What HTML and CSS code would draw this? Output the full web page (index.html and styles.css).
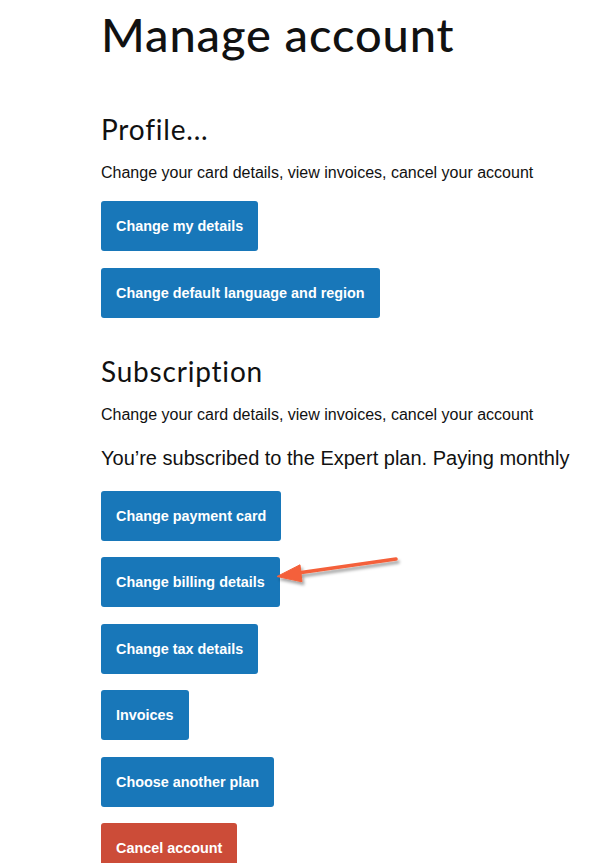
FILE: index.html
```html
<!DOCTYPE html>
<html lang="en">
<head>
<meta charset="utf-8">
<title>Manage account</title>
<link rel="stylesheet" href="styles.css">
</head>
<body>
<main class="page">
  <h1 class="title">Manage account</h1>

  <section class="section">
    <h2 class="section-title">Profile...</h2>
    <p class="lead">Change your card details, view invoices, cancel your account</p>
    <div class="actions actions-profile">
      <a class="btn" href="#">Change my details</a>
      <a class="btn" href="#">Change default language and region</a>
    </div>
  </section>

  <section class="section section-sub">
    <h2 class="section-title">Subscription</h2>
    <p class="lead">Change your card details, view invoices, cancel your account</p>
    <p class="plan">You’re subscribed to the Expert plan. Paying monthly</p>
    <div class="actions actions-sub">
      <a class="btn" href="#">Change payment card</a>
      <a class="btn" href="#">Change billing details</a>
      <a class="btn" href="#">Change tax details</a>
      <a class="btn" href="#">Invoices</a>
      <a class="btn" href="#">Choose another plan</a>
      <a class="btn btn-danger" href="#">Cancel account</a>
    </div>
  </section>

  <svg class="annotation" width="608" height="863" viewBox="0 0 608 863" aria-hidden="true">
    <defs>
      <filter id="shadow" x="-20%" y="-50%" width="140%" height="200%">
        <feDropShadow dx="2" dy="3" stdDeviation="1.8" flood-color="#000" flood-opacity="0.35"/>
      </filter>
    </defs>
    <g filter="url(#shadow)" fill="#f4613a" stroke="#f4613a">
      <line x1="396" y1="559" x2="296" y2="573.2" stroke-width="3.6" stroke-linecap="round"/>
      <polygon points="277,576.5 300,564.8 302,581.8" stroke-width="1" stroke-linejoin="round"/>
    </g>
  </svg>
</main>
</body>
</html>
```

FILE: styles.css
```css
html, body {
  margin: 0;
  padding: 0;
  background: #ffffff;
}

.page {
  position: relative;
  width: 608px;
  height: 863px;
  overflow: hidden;
  box-sizing: border-box;
  padding: 6px 0 0 101px;
  color: #111111;
  font-family: "Liberation Sans", Arial, sans-serif;
}

.title {
  margin: 0;
  font-family: Lato, "Noto Sans", sans-serif;
  font-weight: 500;
  font-size: 47px;
  line-height: 56px;
  letter-spacing: 0.9px;
  color: #111111;
}

.section {
  margin-top: 50px;
}

.section-sub {
  margin-top: 36px;
}

.section-title {
  margin: 0;
  font-family: Lato, "Noto Sans", sans-serif;
  font-weight: 400;
  font-size: 28px;
  line-height: 34px;
  letter-spacing: 0.8px;
  color: #111111;
}

.lead {
  margin: 17px 0 0;
  font-size: 16px;
  line-height: 20px;
}

.plan {
  margin: 21px 0 0;
  font-size: 20px;
  line-height: 24px;
}

.actions {
  display: flex;
  flex-direction: column;
  align-items: flex-start;
}

.actions-profile {
  margin-top: 18px;
  gap: 17px;
}

.actions-sub {
  margin-top: 21px;
  gap: 16.4px;
}

.btn {
  display: inline-flex;
  align-items: center;
  height: 50px;
  padding: 0 15px;
  box-sizing: border-box;
  background: #1877b9;
  color: #ffffff;
  border-radius: 3px;
  font-family: "Liberation Sans", Arial, sans-serif;
  font-weight: 700;
  font-size: 14.4px;
  text-decoration: none;
  white-space: nowrap;
}

.btn-danger {
  background: #cc4c38;
}

.annotation {
  position: absolute;
  left: 0;
  top: 0;
  pointer-events: none;
}
```
